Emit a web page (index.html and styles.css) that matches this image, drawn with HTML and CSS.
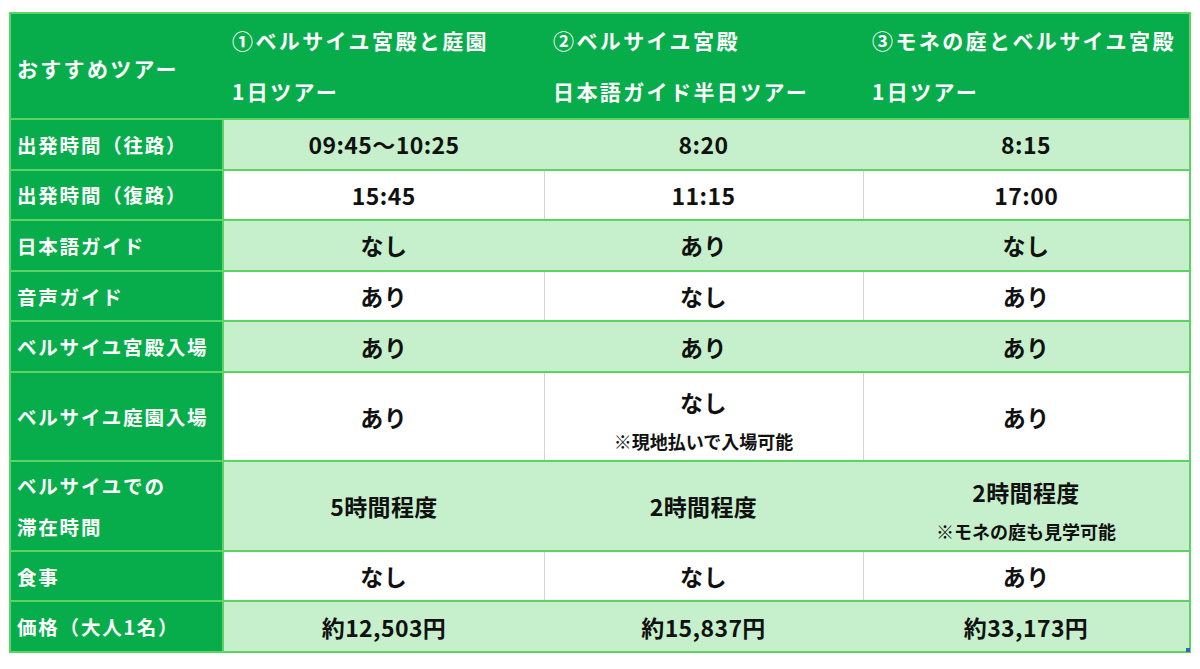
FILE: index.html
```html
<!DOCTYPE html>
<html lang="ja">
<head>
<meta charset="utf-8">
<title>おすすめツアー比較</title>
<link rel="stylesheet" href="styles.css">
</head>
<body>
<div class="wrap">
<table class="tours">
  <colgroup>
    <col class="c-label"><col class="c-1"><col class="c-2"><col class="c-3">
  </colgroup>
  <thead>
    <tr class="head">
      <th class="label">おすすめツアー</th>
      <th class="tour"><span class="line">①ベルサイユ宮殿と庭園</span><span class="line">1日ツアー</span></th>
      <th class="tour"><span class="line">②ベルサイユ宮殿</span><span class="line">日本語ガイド半日ツアー</span></th>
      <th class="tour"><span class="line">③モネの庭とベルサイユ宮殿</span><span class="line">1日ツアー</span></th>
    </tr>
  </thead>
  <tbody>
    <tr class="tint">
      <th class="label">出発時間（往路）</th>
      <td>09:45〜10:25</td><td>8:20</td><td>8:15</td>
    </tr>
    <tr class="plain">
      <th class="label">出発時間（復路）</th>
      <td>15:45</td><td>11:15</td><td>17:00</td>
    </tr>
    <tr class="tint">
      <th class="label">日本語ガイド</th>
      <td>なし</td><td>あり</td><td>なし</td>
    </tr>
    <tr class="plain">
      <th class="label">音声ガイド</th>
      <td>あり</td><td>なし</td><td>あり</td>
    </tr>
    <tr class="tint">
      <th class="label">ベルサイユ宮殿入場</th>
      <td>あり</td><td>あり</td><td>あり</td>
    </tr>
    <tr class="plain tall">
      <th class="label">ベルサイユ庭園入場</th>
      <td>あり</td>
      <td><span class="main">なし</span><span class="note">※現地払いで入場可能</span></td>
      <td>あり</td>
    </tr>
    <tr class="tint tall">
      <th class="label"><span class="lline">ベルサイユでの</span><span class="lline">滞在時間</span></th>
      <td>5時間程度</td>
      <td>2時間程度</td>
      <td><span class="main">2時間程度</span><span class="note">※モネの庭も見学可能</span></td>
    </tr>
    <tr class="plain">
      <th class="label">食事</th>
      <td>なし</td><td>なし</td><td>あり</td>
    </tr>
    <tr class="tint">
      <th class="label">価格（大人1名）</th>
      <td>約12,503円</td><td>約15,837円</td><td class="last">約33,173円<span class="handle"></span></td>
    </tr>
  </tbody>
</table>
</div>
</body>
</html>
```
FILE: styles.css
```css
html, body {
  margin: 0;
  padding: 0;
  background: #ffffff;
}
body {
  font-family: "Noto Sans CJK JP", "Noto Sans", sans-serif;
  color: #111;
}
.wrap {
  padding: 12px 0 0 9px;
}
.tours {
  border-collapse: collapse;
  width: 1180px;
  table-layout: fixed;
  border: 2px solid #5cd463;
}
.c-label { width: 213px; }
.c-1 { width: 321px; }
.c-2 { width: 319px; }
.c-3 { width: 327px; }

.tours th, .tours td {
  padding: 0;
  border-top: 2px solid #5cd463;
  border-bottom: 2px solid #5cd463;
}
.label {
  background: #08ad4b;
  color: #fff;
  font-weight: 700;
  font-size: 19.5px;
  letter-spacing: 1.8px;
  text-align: left;
  padding-left: 6px !important;
  border-right: 2px solid #5cd463;
  height: 48.6px;
  vertical-align: middle;
  white-space: nowrap;
}
.head th {
  background: #08ad4b;
  color: #fff;
  font-weight: 700;
  height: 100px;
  vertical-align: middle;
}
.head .label {
  font-size: 21px;
  letter-spacing: 2.3px;
  padding-top: 4px !important;
  border-right: 0;
}
.head .tour {
  text-align: left;
  padding-left: 9px;
  font-size: 21px;
  letter-spacing: 2.4px;
  border-right: 0;
}
.line {
  display: block;
  line-height: 51px;
  white-space: nowrap;
}
.tours td {
  text-align: center;
  vertical-align: middle;
  font-size: 23px;
  font-weight: 700;
  letter-spacing: 0.4px;
  height: 48.6px;
  color: #111;
}
.tint td {
  background: #c6f0cb;
}
.plain td {
  background: #ffffff;
}
.plain td + td {
  border-left: 1px solid #d4d4d4;
}
.tall th, .tall td {
  height: 87.4px;
}
.lline {
  display: block;
  line-height: 41px;
}
.main {
  display: block;
  line-height: 40px;
  padding-top: 9px;
}
.note {
  display: block;
  font-size: 18px;
  font-weight: 700;
  letter-spacing: 0;
  line-height: 38px;
}
.last {
  position: relative;
}
.handle {
  position: absolute;
  right: -1px;
  bottom: -1px;
  width: 4px;
  height: 4px;
  background: #3a62b8;
}
```
